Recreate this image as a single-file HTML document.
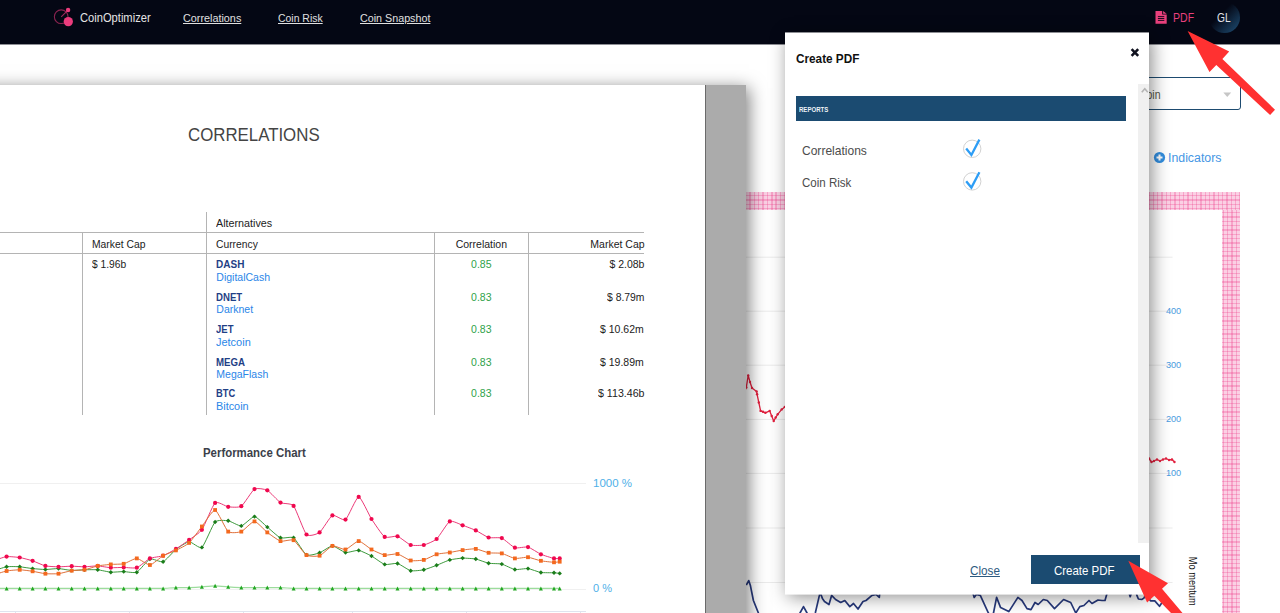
<!DOCTYPE html>
<html lang="en">
<head>
<meta charset="utf-8">
<title>CoinOptimizer - Create PDF</title>
<style>
html,body{margin:0;padding:0;overflow:hidden;}
#root{position:absolute;left:0;top:0;width:1280px;height:613px;overflow:hidden;background:#fff;}
body{width:1280px;height:613px;overflow:hidden;position:relative;background:#fff;font-family:"Liberation Sans",sans-serif;}
.abs{position:absolute;}
.t{position:absolute;white-space:nowrap;line-height:1;transform-origin:0 0;}
/* navbar */
#nav{left:0;top:0;width:1280px;height:44px;background:#040714;}
/* pdf preview image */
#doc{left:-40px;top:85px;width:786px;height:560px;background:#ababab;box-shadow:3px 3px 16px rgba(0,0,0,.5);}
#page{left:0;top:85px;width:705px;height:528px;background:#fff;}
.ln{position:absolute;background:#b4b4b4;}
.pk{position:absolute;background:
repeating-linear-gradient(0deg,rgba(236,50,130,.27) 0,rgba(236,50,130,.27) .4px,transparent .4px,transparent 1.3px),
repeating-linear-gradient(90deg,rgba(236,50,130,.27) 0,rgba(236,50,130,.27) .4px,transparent .4px,transparent 1.3px),#fbd0e4;}
/* modal */
#modal{left:785px;top:33px;width:364px;height:561px;background:#fff;box-shadow:3px 3px 17px rgba(0,0,0,.45);}
</style>
</head>
<body>
<div id="root">

<!-- underlying page (right chart area) -->
<div class="abs" style="left:1100px;top:77px;width:139px;height:31px;border:1px solid #1d4b70;border-radius:3px;"></div>
<div class="t" style="left:1128.5px;top:88.6px;font-size:12.5px;transform:scaleX(0.839);color:#554;">Bitcoin</div>
<svg class="abs" style="left:1222px;top:91px" width="12" height="8" viewBox="1222 91 12 8"><path d="M1223.300 92.500h7.900l-3.950 4.400z" fill="#c6c6c6"/></svg>
<svg class="abs" style="left:1153px;top:151px" width="13" height="13" viewBox="0 0 13 13"><circle cx="6.5" cy="6.5" r="5.6" fill="#338fe0"/><path d="M6.5 3.500v6M3.500 6.500h6" stroke="#fff" stroke-width="2"/></svg>

<div class="t" style="left:1168.0px;top:152.1px;font-size:12.5px;transform:scaleX(0.986);color:#4596e4;">Indicators</div>
<div class="pk" style="left:740px;top:192px;width:500px;height:18px"></div>
<div class="pk" style="left:1222px;top:210px;width:18px;height:403px"></div>
<svg class="abs" style="left:700px;top:180px" width="580" height="433" viewBox="700 180 580 433">
<path d="M745 257.200H1172.500M745 311.200H1172.500M745 365.200H1172.500M745 419.400H1172.500M745 473.400H1172.500M745 528H1172.500M745 582.500H1172.500" stroke="#ebebeb" stroke-width="1" fill="none"/>
<g font-family="Liberation Sans, sans-serif" font-size="9.6" fill="#4a9be0">
<text x="1165.900" y="313.900" textLength="15.300" lengthAdjust="spacingAndGlyphs">400</text><text x="1165.900" y="367.600" textLength="15.300" lengthAdjust="spacingAndGlyphs">300</text><text x="1165.900" y="421.900" textLength="15.300" lengthAdjust="spacingAndGlyphs">200</text><text x="1165.900" y="476" textLength="15.300" lengthAdjust="spacingAndGlyphs">100</text>
</g>
<path d="M744.5 392.0L746.3 387.4L748.2 375.4L750.0 382.0L752.0 388.0L756.6 391.4L757.1 394.3L758.8 402.5L760.6 410.9L763.0 411.8L765.4 412.8L769.7 410.9L771.7 416.0L773.7 421.1L775.7 417.5L777.7 414.3L781.7 409.4L784.8 406.9L788.0 404.5M1146.0 461.0L1149.0 458.5L1151.5 462.0L1154.0 461.0L1157.0 459.5L1160.0 461.0L1163.0 459.5L1166.0 458.5L1169.0 460.0L1172.0 459.5L1174.5 462.0" stroke="#e2213f" stroke-width="1.3" fill="none" stroke-linejoin="round"/>
<circle cx="744.5" cy="392.0" r="1.2" fill="#e2213f"/><circle cx="746.3" cy="387.4" r="1.2" fill="#e2213f"/><circle cx="748.2" cy="375.4" r="1.2" fill="#e2213f"/><circle cx="750.0" cy="382.0" r="1.2" fill="#e2213f"/><circle cx="752.0" cy="388.0" r="1.2" fill="#e2213f"/><circle cx="756.6" cy="391.4" r="1.2" fill="#e2213f"/><circle cx="757.1" cy="394.3" r="1.2" fill="#e2213f"/><circle cx="758.8" cy="402.5" r="1.2" fill="#e2213f"/><circle cx="760.6" cy="410.9" r="1.2" fill="#e2213f"/><circle cx="763.0" cy="411.8" r="1.2" fill="#e2213f"/><circle cx="765.4" cy="412.8" r="1.2" fill="#e2213f"/><circle cx="769.7" cy="410.9" r="1.2" fill="#e2213f"/><circle cx="771.7" cy="416.0" r="1.2" fill="#e2213f"/><circle cx="773.7" cy="421.1" r="1.2" fill="#e2213f"/><circle cx="775.7" cy="417.5" r="1.2" fill="#e2213f"/><circle cx="777.7" cy="414.3" r="1.2" fill="#e2213f"/><circle cx="781.7" cy="409.4" r="1.2" fill="#e2213f"/><circle cx="784.8" cy="406.9" r="1.2" fill="#e2213f"/><circle cx="788.0" cy="404.5" r="1.2" fill="#e2213f"/><circle cx="1146.0" cy="461.0" r="1.2" fill="#e2213f"/><circle cx="1149.0" cy="458.5" r="1.2" fill="#e2213f"/><circle cx="1151.5" cy="462.0" r="1.2" fill="#e2213f"/><circle cx="1154.0" cy="461.0" r="1.2" fill="#e2213f"/><circle cx="1157.0" cy="459.5" r="1.2" fill="#e2213f"/><circle cx="1160.0" cy="461.0" r="1.2" fill="#e2213f"/><circle cx="1163.0" cy="459.5" r="1.2" fill="#e2213f"/><circle cx="1166.0" cy="458.5" r="1.2" fill="#e2213f"/><circle cx="1169.0" cy="460.0" r="1.2" fill="#e2213f"/><circle cx="1172.0" cy="459.5" r="1.2" fill="#e2213f"/><circle cx="1174.5" cy="462.0" r="1.2" fill="#e2213f"/>
<path d="M746.3 585.2L748.7 580.6L750.3 585.2L753.4 600.5L758.4 613.0L760.0 618.0M798.5 616.0L800.0 613.0L803.5 606.6L807.0 613.0L809.0 617.0L814.0 617.0L815.3 613.0L819.4 595.4L820.0 592.0L822.4 598.4L824.5 601.5L829.0 604.5L831.6 595.4L835.6 599.5L840.7 602.5L844.8 600.5L849.8 606.6L853.5 603.5L858.0 609.0L863.0 601.5L866.0 600.5L872.0 595.4L876.0 594.4L879.3 597.4L880.0 590.0M972.0 590.0L974.2 597.4L976.3 594.4L980.3 595.4L988.4 613.0L991.0 617.0L993.5 613.0L996.6 597.4L1000.6 607.6L1004.7 609.6L1008.8 611.6L1017.9 597.4L1022.0 600.5L1027.0 608.6L1031.0 609.6L1035.0 602.5L1038.2 604.5L1043.3 599.5L1047.3 600.5L1054.5 608.6L1063.6 599.5L1070.7 602.5L1075.8 613.0L1079.8 606.6L1083.9 605.5L1089.0 600.5L1092.0 603.5L1098.0 600.0L1102.0 600.5L1105.0 600.5L1106.7 594.4L1108.0 588.0M1128.5 591.0L1130.2 596.8L1132.0 591.0M1136.0 589.0L1136.8 595.1L1138.4 599.0L1141.7 599.5L1143.9 598.1L1146.0 594.0L1148.0 597.0L1150.5 600.9L1154.8 600.9L1159.5 606.3L1161.7 603.0L1164.0 600.0" stroke="#27397c" stroke-width="1.7" fill="none" stroke-linejoin="round"/>
<text transform="translate(1188.800 556.700) rotate(90)" font-family="Liberation Sans, sans-serif" font-size="11" fill="#111" textLength="49" lengthAdjust="spacingAndGlyphs">Mo mentum</text>
</svg>

<!-- PDF preview image on the left -->
<div class="abs" id="doc"></div>
<div class="abs" id="page"></div>
<div class="abs" style="left:705px;top:85px;width:1px;height:528px;background:#6a6a6a;"></div>

<div class="ln" style="left:0;top:232px;width:644px;height:1px"></div>
<div class="ln" style="left:0;top:253px;width:644px;height:1px"></div>
<div class="ln" style="left:82px;top:232px;width:1px;height:183px"></div>
<div class="ln" style="left:206px;top:212px;width:1px;height:203px"></div>
<div class="ln" style="left:434px;top:232px;width:1px;height:183px"></div>
<div class="ln" style="left:528px;top:232px;width:1px;height:183px"></div>





<div class="t" style="left:188.3px;top:126.7px;font-size:17.8px;transform:scaleX(0.947);color:#444;">CORRELATIONS</div>
<div class="t" style="left:216.3px;top:217.8px;font-size:10.5px;transform:scaleX(1.024);color:#222;">Alternatives</div>
<div class="t" style="left:91.7px;top:238.6px;font-size:10.5px;transform:scaleX(0.985);color:#222;">Market Cap</div>
<div class="t" style="left:216.3px;top:238.6px;font-size:10.5px;transform:scaleX(0.981);color:#222;">Currency</div>
<div class="t" style="left:455.7px;top:238.6px;font-size:10.5px;color:#222;">Correlation</div>
<div class="t" style="left:590.3px;top:238.6px;font-size:10.5px;color:#222;">Market Cap</div>
<div class="t" style="left:91.7px;top:259.4px;font-size:10.5px;transform:scaleX(0.975);color:#222;">$ 1.96b</div>
<div class="t" style="left:216.3px;top:259.4px;font-size:10.5px;transform:scaleX(0.953);color:#1f3f86;font-weight:bold;">DASH</div>
<div class="t" style="left:216.3px;top:271.7px;font-size:10.5px;color:#2a86e8;">DigitalCash</div>
<div class="t" style="left:216.3px;top:292.1px;font-size:10.5px;transform:scaleX(0.915);color:#1f3f86;font-weight:bold;">DNET</div>
<div class="t" style="left:216.3px;top:303.8px;font-size:10.5px;color:#2a86e8;">Darknet</div>
<div class="t" style="left:216.3px;top:324.1px;font-size:10.5px;transform:scaleX(0.907);color:#1f3f86;font-weight:bold;">JET</div>
<div class="t" style="left:216.3px;top:336.7px;font-size:10.5px;transform:scaleX(1.044);color:#2a86e8;">Jetcoin</div>
<div class="t" style="left:216.3px;top:356.5px;font-size:10.5px;transform:scaleX(0.921);color:#1f3f86;font-weight:bold;">MEGA</div>
<div class="t" style="left:216.3px;top:368.7px;font-size:10.5px;color:#2a86e8;">MegaFlash</div>
<div class="t" style="left:216.3px;top:388.3px;font-size:10.5px;transform:scaleX(0.891);color:#1f3f86;font-weight:bold;">BTC</div>
<div class="t" style="left:216.3px;top:400.9px;font-size:10.5px;transform:scaleX(1.035);color:#2a86e8;">Bitcoin</div>
<div class="t" style="left:471.1px;top:259.4px;font-size:10.5px;color:#2fa24a;">0.85</div>
<div class="t" style="left:471.1px;top:292.1px;font-size:10.5px;color:#2fa24a;">0.83</div>
<div class="t" style="left:471.1px;top:324.1px;font-size:10.5px;color:#2fa24a;">0.83</div>
<div class="t" style="left:471.1px;top:356.5px;font-size:10.5px;color:#2fa24a;">0.83</div>
<div class="t" style="left:471.1px;top:388.3px;font-size:10.5px;color:#2fa24a;">0.83</div>
<div class="t" style="left:609.4px;top:259.4px;font-size:10.5px;color:#222;">$ 2.08b</div>
<div class="t" style="left:606.5px;top:292.1px;font-size:10.5px;transform:scaleX(0.987);color:#222;">$ 8.79m</div>
<div class="t" style="left:600.0px;top:324.1px;font-size:10.5px;color:#222;">$ 10.62m</div>
<div class="t" style="left:600.0px;top:356.5px;font-size:10.5px;color:#222;">$ 19.89m</div>
<div class="t" style="left:597.5px;top:388.3px;font-size:10.5px;transform:scaleX(1.013);color:#222;">$ 113.46b</div>
<div class="t" style="left:203.1px;top:447.3px;font-size:12px;transform:scaleX(0.951);color:#3c3f4a;font-weight:bold;">Performance Chart</div>
<div class="t" style="left:593.0px;top:478.0px;font-size:11.3px;transform:scaleX(1.019);color:#4fb0e8;">1000 %</div>
<div class="t" style="left:593.0px;top:583.4px;font-size:11.3px;transform:scaleX(0.978);color:#4fb0e8;">0 %</div>

<svg class="abs" style="left:0;top:440px" width="705" height="173" viewBox="0 440 705 173">
<path d="M0 483.5H586M0 589.5H586" stroke="#f0f0f0" stroke-width="1" fill="none"/>
<path d="M0 611.5H586M15.5 611v3M129.5 611v3M243.5 611v3M352.5 611v3M466.5 611v3M580.5 611v3" stroke="#dfe4ee" stroke-width="1" fill="none"/>
<path d="M-6.4 588.4C-5.2 588.4 4.2 588.4 6.6 588.4C8.9 588.4 17.4 588.4 19.7 588.4C22.1 588.4 30.2 588.4 32.6 588.4C34.9 588.4 43.1 588.4 45.4 588.4C47.7 588.4 56.2 588.4 58.5 588.4C60.9 588.4 69.3 588.4 71.7 588.4C74.0 588.4 82.2 588.4 84.5 588.4C86.9 588.4 95.3 588.4 97.7 588.4C100.0 588.4 108.5 588.4 110.8 588.4C113.2 588.4 121.3 588.4 123.7 588.4C126.0 588.4 134.4 588.4 136.8 588.4C139.2 588.4 147.6 588.4 149.9 588.4C152.3 588.4 160.7 588.5 163.1 588.4C165.4 588.3 173.6 587.7 175.9 587.6C178.3 587.5 186.7 587.7 189.1 587.6C191.4 587.5 199.6 587.0 201.9 586.8C204.3 586.6 212.7 585.8 215.1 585.8C217.4 585.8 225.8 586.6 228.2 586.8C230.6 587.0 239.0 587.5 241.3 587.6C243.7 587.7 252.1 587.6 254.5 587.6C256.8 587.6 265.0 587.6 267.3 587.6C269.7 587.6 278.1 587.5 280.5 587.6C282.8 587.7 291.3 588.3 293.6 588.4C295.9 588.5 304.1 588.4 306.5 588.4C308.8 588.4 317.2 588.4 319.6 588.4C321.9 588.4 330.1 588.4 332.4 588.4C334.7 588.4 343.2 588.4 345.5 588.4C347.9 588.4 356.3 588.4 358.7 588.4C361.0 588.4 369.2 588.4 371.5 588.4C373.9 588.4 382.3 588.4 384.7 588.4C387.0 588.4 395.2 588.4 397.5 588.4C399.9 588.4 408.3 588.4 410.7 588.4C413.0 588.4 421.5 588.4 423.8 588.4C426.1 588.4 434.3 588.4 436.6 588.4C439.0 588.4 447.4 588.4 449.8 588.4C452.1 588.4 460.3 588.4 462.6 588.4C465.0 588.4 473.4 588.4 475.8 588.4C478.1 588.4 486.3 588.4 488.6 588.4C491.0 588.4 499.4 588.4 501.8 588.4C504.1 588.4 512.5 588.4 514.9 588.4C517.3 588.4 525.7 588.4 528.0 588.4C530.4 588.4 538.5 588.4 540.9 588.4C543.2 588.4 552.3 588.4 554.0 588.4C555.7 588.4 559.2 588.4 559.7 588.4" stroke="#9cdc9c" stroke-width="1.2" fill="none"/>
<path d="M-6.4 586.4l2 4h-4z" fill="#22a722"/><path d="M6.6 586.4l2 4h-4z" fill="#22a722"/><path d="M19.7 586.4l2 4h-4z" fill="#22a722"/><path d="M32.6 586.4l2 4h-4z" fill="#22a722"/><path d="M45.4 586.4l2 4h-4z" fill="#22a722"/><path d="M58.5 586.4l2 4h-4z" fill="#22a722"/><path d="M71.7 586.4l2 4h-4z" fill="#22a722"/><path d="M84.5 586.4l2 4h-4z" fill="#22a722"/><path d="M97.7 586.4l2 4h-4z" fill="#22a722"/><path d="M110.8 586.4l2 4h-4z" fill="#22a722"/><path d="M123.7 586.4l2 4h-4z" fill="#22a722"/><path d="M136.8 586.4l2 4h-4z" fill="#22a722"/><path d="M149.9 586.4l2 4h-4z" fill="#22a722"/><path d="M163.1 586.4l2 4h-4z" fill="#22a722"/><path d="M175.9 585.6l2 4h-4z" fill="#22a722"/><path d="M189.1 585.6l2 4h-4z" fill="#22a722"/><path d="M201.9 584.8l2 4h-4z" fill="#22a722"/><path d="M215.1 583.8l2 4h-4z" fill="#22a722"/><path d="M228.2 584.8l2 4h-4z" fill="#22a722"/><path d="M241.3 585.6l2 4h-4z" fill="#22a722"/><path d="M254.5 585.6l2 4h-4z" fill="#22a722"/><path d="M267.3 585.6l2 4h-4z" fill="#22a722"/><path d="M280.5 585.6l2 4h-4z" fill="#22a722"/><path d="M293.6 586.4l2 4h-4z" fill="#22a722"/><path d="M306.5 586.4l2 4h-4z" fill="#22a722"/><path d="M319.6 586.4l2 4h-4z" fill="#22a722"/><path d="M332.4 586.4l2 4h-4z" fill="#22a722"/><path d="M345.5 586.4l2 4h-4z" fill="#22a722"/><path d="M358.7 586.4l2 4h-4z" fill="#22a722"/><path d="M371.5 586.4l2 4h-4z" fill="#22a722"/><path d="M384.7 586.4l2 4h-4z" fill="#22a722"/><path d="M397.5 586.4l2 4h-4z" fill="#22a722"/><path d="M410.7 586.4l2 4h-4z" fill="#22a722"/><path d="M423.8 586.4l2 4h-4z" fill="#22a722"/><path d="M436.6 586.4l2 4h-4z" fill="#22a722"/><path d="M449.8 586.4l2 4h-4z" fill="#22a722"/><path d="M462.6 586.4l2 4h-4z" fill="#22a722"/><path d="M475.8 586.4l2 4h-4z" fill="#22a722"/><path d="M488.6 586.4l2 4h-4z" fill="#22a722"/><path d="M501.8 586.4l2 4h-4z" fill="#22a722"/><path d="M514.9 586.4l2 4h-4z" fill="#22a722"/><path d="M528.0 586.4l2 4h-4z" fill="#22a722"/><path d="M540.9 586.4l2 4h-4z" fill="#22a722"/><path d="M554.0 586.4l2 4h-4z" fill="#22a722"/><path d="M559.7 586.4l2 4h-4z" fill="#22a722"/>
<path d="M-6.4 570.8C-5.2 570.4 4.2 567.2 6.6 566.8C8.9 566.4 17.4 566.6 19.7 566.8C22.1 567.0 30.2 568.3 32.6 568.6C34.9 568.8 43.1 569.5 45.4 569.5C47.7 569.5 56.2 568.5 58.5 568.6C60.9 568.7 69.3 570.3 71.7 570.4C74.0 570.5 82.2 569.8 84.5 569.8C86.9 569.7 95.3 569.6 97.7 569.8C100.0 570.0 108.5 572.0 110.8 572.2C113.2 572.3 121.3 571.6 123.7 571.6C126.0 571.6 134.4 573.3 136.8 572.2C139.2 571.0 147.6 560.0 149.9 559.0C152.3 558.1 160.7 562.6 163.1 561.7C165.4 560.9 173.6 551.3 175.9 549.5C178.3 547.7 186.7 541.9 189.1 541.7C191.4 541.5 199.6 549.2 201.9 547.4C204.3 545.6 212.7 524.4 215.1 522.0C217.4 519.6 225.8 520.5 228.2 520.8C230.6 521.1 239.0 526.3 241.3 525.9C243.7 525.5 252.1 516.5 254.5 516.6C256.8 516.7 265.0 525.2 267.3 527.1C269.7 529.0 278.1 536.9 280.5 537.8C282.8 538.8 291.3 536.3 293.6 537.8C295.9 539.4 304.1 553.5 306.5 554.9C308.8 556.2 317.2 553.6 319.6 552.8C321.9 552.0 330.1 545.9 332.4 545.9C334.7 545.9 343.2 552.1 345.5 552.5C347.9 552.9 356.3 550.0 358.7 550.4C361.0 550.7 369.2 554.8 371.5 556.0C373.9 557.3 382.3 563.7 384.7 564.4C387.0 565.1 395.2 562.9 397.5 563.5C399.9 564.1 408.3 570.1 410.7 570.7C413.0 571.2 421.5 570.3 423.8 569.8C426.1 569.3 434.3 566.2 436.6 565.3C439.0 564.4 447.4 560.6 449.8 559.9C452.1 559.3 460.3 558.2 462.6 558.1C465.0 558.1 473.4 558.6 475.8 559.0C478.1 559.5 486.3 562.8 488.6 563.2C491.0 563.7 499.4 563.5 501.8 564.1C504.1 564.7 512.5 569.1 514.9 569.5C517.3 569.9 525.7 568.3 528.0 568.6C530.4 568.9 538.5 572.1 540.9 572.5C543.2 572.8 552.3 572.7 554.0 572.8C555.7 572.9 559.2 573.3 559.7 573.4" stroke="#3c9a3c" stroke-width="1" fill="none"/>
<path d="M-6.4 568.6l2.2 2.2l-2.2 2.2l-2.2 -2.2z" fill="#1a7d1a"/><path d="M6.6 564.6l2.2 2.2l-2.2 2.2l-2.2 -2.2z" fill="#1a7d1a"/><path d="M19.7 564.6l2.2 2.2l-2.2 2.2l-2.2 -2.2z" fill="#1a7d1a"/><path d="M32.6 566.4l2.2 2.2l-2.2 2.2l-2.2 -2.2z" fill="#1a7d1a"/><path d="M45.4 567.3l2.2 2.2l-2.2 2.2l-2.2 -2.2z" fill="#1a7d1a"/><path d="M58.5 566.4l2.2 2.2l-2.2 2.2l-2.2 -2.2z" fill="#1a7d1a"/><path d="M71.7 568.2l2.2 2.2l-2.2 2.2l-2.2 -2.2z" fill="#1a7d1a"/><path d="M84.5 567.6l2.2 2.2l-2.2 2.2l-2.2 -2.2z" fill="#1a7d1a"/><path d="M97.7 567.6l2.2 2.2l-2.2 2.2l-2.2 -2.2z" fill="#1a7d1a"/><path d="M110.8 570.0l2.2 2.2l-2.2 2.2l-2.2 -2.2z" fill="#1a7d1a"/><path d="M123.7 569.4l2.2 2.2l-2.2 2.2l-2.2 -2.2z" fill="#1a7d1a"/><path d="M136.8 570.0l2.2 2.2l-2.2 2.2l-2.2 -2.2z" fill="#1a7d1a"/><path d="M149.9 556.8l2.2 2.2l-2.2 2.2l-2.2 -2.2z" fill="#1a7d1a"/><path d="M163.1 559.5l2.2 2.2l-2.2 2.2l-2.2 -2.2z" fill="#1a7d1a"/><path d="M175.9 547.3l2.2 2.2l-2.2 2.2l-2.2 -2.2z" fill="#1a7d1a"/><path d="M189.1 539.5l2.2 2.2l-2.2 2.2l-2.2 -2.2z" fill="#1a7d1a"/><path d="M201.9 545.2l2.2 2.2l-2.2 2.2l-2.2 -2.2z" fill="#1a7d1a"/><path d="M215.1 519.8l2.2 2.2l-2.2 2.2l-2.2 -2.2z" fill="#1a7d1a"/><path d="M228.2 518.6l2.2 2.2l-2.2 2.2l-2.2 -2.2z" fill="#1a7d1a"/><path d="M241.3 523.7l2.2 2.2l-2.2 2.2l-2.2 -2.2z" fill="#1a7d1a"/><path d="M254.5 514.4l2.2 2.2l-2.2 2.2l-2.2 -2.2z" fill="#1a7d1a"/><path d="M267.3 524.9l2.2 2.2l-2.2 2.2l-2.2 -2.2z" fill="#1a7d1a"/><path d="M280.5 535.6l2.2 2.2l-2.2 2.2l-2.2 -2.2z" fill="#1a7d1a"/><path d="M293.6 535.6l2.2 2.2l-2.2 2.2l-2.2 -2.2z" fill="#1a7d1a"/><path d="M306.5 552.7l2.2 2.2l-2.2 2.2l-2.2 -2.2z" fill="#1a7d1a"/><path d="M319.6 550.6l2.2 2.2l-2.2 2.2l-2.2 -2.2z" fill="#1a7d1a"/><path d="M332.4 543.7l2.2 2.2l-2.2 2.2l-2.2 -2.2z" fill="#1a7d1a"/><path d="M345.5 550.3l2.2 2.2l-2.2 2.2l-2.2 -2.2z" fill="#1a7d1a"/><path d="M358.7 548.2l2.2 2.2l-2.2 2.2l-2.2 -2.2z" fill="#1a7d1a"/><path d="M371.5 553.8l2.2 2.2l-2.2 2.2l-2.2 -2.2z" fill="#1a7d1a"/><path d="M384.7 562.2l2.2 2.2l-2.2 2.2l-2.2 -2.2z" fill="#1a7d1a"/><path d="M397.5 561.3l2.2 2.2l-2.2 2.2l-2.2 -2.2z" fill="#1a7d1a"/><path d="M410.7 568.5l2.2 2.2l-2.2 2.2l-2.2 -2.2z" fill="#1a7d1a"/><path d="M423.8 567.6l2.2 2.2l-2.2 2.2l-2.2 -2.2z" fill="#1a7d1a"/><path d="M436.6 563.1l2.2 2.2l-2.2 2.2l-2.2 -2.2z" fill="#1a7d1a"/><path d="M449.8 557.7l2.2 2.2l-2.2 2.2l-2.2 -2.2z" fill="#1a7d1a"/><path d="M462.6 555.9l2.2 2.2l-2.2 2.2l-2.2 -2.2z" fill="#1a7d1a"/><path d="M475.8 556.8l2.2 2.2l-2.2 2.2l-2.2 -2.2z" fill="#1a7d1a"/><path d="M488.6 561.0l2.2 2.2l-2.2 2.2l-2.2 -2.2z" fill="#1a7d1a"/><path d="M501.8 561.9l2.2 2.2l-2.2 2.2l-2.2 -2.2z" fill="#1a7d1a"/><path d="M514.9 567.3l2.2 2.2l-2.2 2.2l-2.2 -2.2z" fill="#1a7d1a"/><path d="M528.0 566.4l2.2 2.2l-2.2 2.2l-2.2 -2.2z" fill="#1a7d1a"/><path d="M540.9 570.3l2.2 2.2l-2.2 2.2l-2.2 -2.2z" fill="#1a7d1a"/><path d="M554.0 570.6l2.2 2.2l-2.2 2.2l-2.2 -2.2z" fill="#1a7d1a"/><path d="M559.7 571.2l2.2 2.2l-2.2 2.2l-2.2 -2.2z" fill="#1a7d1a"/>
<path d="M-6.4 560.6C-5.2 560.3 4.2 556.9 6.6 556.6C8.9 556.4 17.4 557.2 19.7 557.5C22.1 557.9 30.2 560.1 32.6 560.8C34.9 561.6 43.1 565.4 45.4 565.9C47.7 566.4 56.2 566.8 58.5 566.8C60.9 566.8 69.3 566.2 71.7 566.2C74.0 566.2 82.2 566.8 84.5 566.8C86.9 566.8 95.3 565.8 97.7 565.9C100.0 566.0 108.5 567.6 110.8 567.7C113.2 567.8 121.3 567.4 123.7 567.4C126.0 567.4 134.4 568.5 136.8 567.7C139.2 566.9 147.6 559.5 149.9 558.4C152.3 557.4 160.7 556.6 163.1 555.7C165.4 554.9 173.6 550.3 175.9 548.9C178.3 547.5 186.7 541.6 189.1 539.9C191.4 538.2 199.6 533.1 201.9 529.8C204.3 526.4 212.7 504.9 215.1 502.9C217.4 500.8 225.8 506.5 228.2 506.8C230.6 507.1 239.0 507.8 241.3 506.2C243.7 504.6 252.1 490.6 254.5 489.1C256.8 487.7 265.0 489.1 267.3 490.3C269.7 491.5 278.1 501.2 280.5 502.6C282.8 504.0 291.3 503.0 293.6 505.9C295.9 508.7 304.1 532.1 306.5 534.5C308.8 536.9 317.2 534.2 319.6 532.4C321.9 530.7 330.1 516.6 332.4 515.4C334.7 514.3 343.2 521.3 345.5 519.6C347.9 517.9 356.3 497.0 358.7 496.9C361.0 496.9 369.2 515.4 371.5 519.0C373.9 522.6 382.3 535.4 384.7 536.9C387.0 538.5 395.2 535.6 397.5 536.3C399.9 537.1 408.3 544.2 410.7 545.0C413.0 545.8 421.5 545.5 423.8 545.0C426.1 544.5 434.3 541.1 436.6 539.0C439.0 536.9 447.4 522.6 449.8 521.4C452.1 520.2 460.3 524.5 462.6 525.3C465.0 526.1 473.4 529.3 475.8 530.4C478.1 531.5 486.3 536.8 488.6 537.5C491.0 538.2 499.4 537.2 501.8 538.1C504.1 539.0 512.5 546.9 514.9 547.7C517.3 548.5 525.7 546.5 528.0 547.1C530.4 547.7 538.5 553.2 540.9 554.3C543.2 555.3 552.3 558.1 554.0 558.4C555.7 558.8 559.2 558.4 559.7 558.4" stroke="#ec3a78" stroke-width="1" fill="none"/>
<circle cx="-6.4" cy="560.6" r="2.1" fill="#f0084e"/><circle cx="6.6" cy="556.6" r="2.1" fill="#f0084e"/><circle cx="19.7" cy="557.5" r="2.1" fill="#f0084e"/><circle cx="32.6" cy="560.8" r="2.1" fill="#f0084e"/><circle cx="45.4" cy="565.9" r="2.1" fill="#f0084e"/><circle cx="58.5" cy="566.8" r="2.1" fill="#f0084e"/><circle cx="71.7" cy="566.2" r="2.1" fill="#f0084e"/><circle cx="84.5" cy="566.8" r="2.1" fill="#f0084e"/><circle cx="97.7" cy="565.9" r="2.1" fill="#f0084e"/><circle cx="110.8" cy="567.7" r="2.1" fill="#f0084e"/><circle cx="123.7" cy="567.4" r="2.1" fill="#f0084e"/><circle cx="136.8" cy="567.7" r="2.1" fill="#f0084e"/><circle cx="149.9" cy="558.4" r="2.1" fill="#f0084e"/><circle cx="163.1" cy="555.7" r="2.1" fill="#f0084e"/><circle cx="175.9" cy="548.9" r="2.1" fill="#f0084e"/><circle cx="189.1" cy="539.9" r="2.1" fill="#f0084e"/><circle cx="201.9" cy="529.8" r="2.1" fill="#f0084e"/><circle cx="215.1" cy="502.9" r="2.1" fill="#f0084e"/><circle cx="228.2" cy="506.8" r="2.1" fill="#f0084e"/><circle cx="241.3" cy="506.2" r="2.1" fill="#f0084e"/><circle cx="254.5" cy="489.1" r="2.1" fill="#f0084e"/><circle cx="267.3" cy="490.3" r="2.1" fill="#f0084e"/><circle cx="280.5" cy="502.6" r="2.1" fill="#f0084e"/><circle cx="293.6" cy="505.9" r="2.1" fill="#f0084e"/><circle cx="306.5" cy="534.5" r="2.1" fill="#f0084e"/><circle cx="319.6" cy="532.4" r="2.1" fill="#f0084e"/><circle cx="332.4" cy="515.4" r="2.1" fill="#f0084e"/><circle cx="345.5" cy="519.6" r="2.1" fill="#f0084e"/><circle cx="358.7" cy="496.9" r="2.1" fill="#f0084e"/><circle cx="371.5" cy="519.0" r="2.1" fill="#f0084e"/><circle cx="384.7" cy="536.9" r="2.1" fill="#f0084e"/><circle cx="397.5" cy="536.3" r="2.1" fill="#f0084e"/><circle cx="410.7" cy="545.0" r="2.1" fill="#f0084e"/><circle cx="423.8" cy="545.0" r="2.1" fill="#f0084e"/><circle cx="436.6" cy="539.0" r="2.1" fill="#f0084e"/><circle cx="449.8" cy="521.4" r="2.1" fill="#f0084e"/><circle cx="462.6" cy="525.3" r="2.1" fill="#f0084e"/><circle cx="475.8" cy="530.4" r="2.1" fill="#f0084e"/><circle cx="488.6" cy="537.5" r="2.1" fill="#f0084e"/><circle cx="501.8" cy="538.1" r="2.1" fill="#f0084e"/><circle cx="514.9" cy="547.7" r="2.1" fill="#f0084e"/><circle cx="528.0" cy="547.1" r="2.1" fill="#f0084e"/><circle cx="540.9" cy="554.3" r="2.1" fill="#f0084e"/><circle cx="554.0" cy="558.4" r="2.1" fill="#f0084e"/><circle cx="559.7" cy="558.4" r="2.1" fill="#f0084e"/>
<path d="M-6.4 575.0C-5.2 574.6 4.2 571.4 6.6 571.0C8.9 570.5 17.4 569.8 19.7 569.8C22.1 569.8 30.2 570.9 32.6 571.3C34.9 571.6 43.1 573.5 45.4 573.7C47.7 573.9 56.2 573.9 58.5 573.7C60.9 573.4 69.3 571.0 71.7 570.7C74.0 570.3 82.2 570.2 84.5 569.8C86.9 569.4 95.3 566.4 97.7 565.9C100.0 565.4 108.5 564.6 110.8 564.4C113.2 564.2 121.3 564.3 123.7 563.8C126.0 563.3 134.4 558.3 136.8 558.4C139.2 558.5 147.6 565.2 149.9 565.0C152.3 564.8 160.7 557.1 163.1 555.7C165.4 554.4 173.6 551.5 175.9 550.4C178.3 549.2 186.7 545.1 189.1 542.9C191.4 540.8 199.6 529.4 201.9 526.5C204.3 523.5 212.7 509.6 215.1 510.0C217.4 510.5 225.8 529.6 228.2 531.6C230.6 533.5 239.0 532.5 241.3 531.6C243.7 530.6 252.1 521.3 254.5 521.4C256.8 521.5 265.0 530.7 267.3 532.4C269.7 534.2 278.1 540.4 280.5 541.1C282.8 541.8 291.3 539.0 293.6 540.2C295.9 541.5 304.1 553.8 306.5 555.1C308.8 556.5 317.2 556.6 319.6 555.7C321.9 554.9 330.1 546.5 332.4 545.9C334.7 545.3 343.2 549.9 345.5 549.5C347.9 549.0 356.3 541.1 358.7 541.1C361.0 541.1 369.2 548.2 371.5 549.5C373.9 550.7 382.3 554.7 384.7 555.1C387.0 555.6 395.2 553.5 397.5 554.0C399.9 554.4 408.3 560.0 410.7 560.5C413.0 561.1 421.5 560.5 423.8 559.9C426.1 559.4 434.3 554.9 436.6 554.3C439.0 553.6 447.4 552.8 449.8 552.5C452.1 552.1 460.3 550.4 462.6 550.1C465.0 549.7 473.4 548.6 475.8 548.9C478.1 549.1 486.3 552.4 488.6 552.8C491.0 553.2 499.4 552.8 501.8 553.4C504.1 553.9 512.5 558.1 514.9 558.4C517.3 558.8 525.7 557.0 528.0 557.2C530.4 557.5 538.5 560.4 540.9 560.8C543.2 561.3 552.3 562.2 554.0 562.3C555.7 562.4 559.2 561.8 559.7 561.7" stroke="#e0703a" stroke-width="1" fill="none"/>
<rect x="-8.3" y="573.1" width="3.8" height="3.8" fill="#f4691e"/><rect x="4.7" y="569.1" width="3.8" height="3.8" fill="#f4691e"/><rect x="17.8" y="567.9" width="3.8" height="3.8" fill="#f4691e"/><rect x="30.7" y="569.4" width="3.8" height="3.8" fill="#f4691e"/><rect x="43.5" y="571.8" width="3.8" height="3.8" fill="#f4691e"/><rect x="56.6" y="571.8" width="3.8" height="3.8" fill="#f4691e"/><rect x="69.8" y="568.8" width="3.8" height="3.8" fill="#f4691e"/><rect x="82.6" y="567.9" width="3.8" height="3.8" fill="#f4691e"/><rect x="95.8" y="564.0" width="3.8" height="3.8" fill="#f4691e"/><rect x="108.9" y="562.5" width="3.8" height="3.8" fill="#f4691e"/><rect x="121.8" y="561.9" width="3.8" height="3.8" fill="#f4691e"/><rect x="134.9" y="556.5" width="3.8" height="3.8" fill="#f4691e"/><rect x="148.0" y="563.1" width="3.8" height="3.8" fill="#f4691e"/><rect x="161.2" y="553.8" width="3.8" height="3.8" fill="#f4691e"/><rect x="174.0" y="548.5" width="3.8" height="3.8" fill="#f4691e"/><rect x="187.2" y="541.0" width="3.8" height="3.8" fill="#f4691e"/><rect x="200.0" y="524.6" width="3.8" height="3.8" fill="#f4691e"/><rect x="213.2" y="508.1" width="3.8" height="3.8" fill="#f4691e"/><rect x="226.3" y="529.7" width="3.8" height="3.8" fill="#f4691e"/><rect x="239.4" y="529.7" width="3.8" height="3.8" fill="#f4691e"/><rect x="252.6" y="519.5" width="3.8" height="3.8" fill="#f4691e"/><rect x="265.4" y="530.5" width="3.8" height="3.8" fill="#f4691e"/><rect x="278.6" y="539.2" width="3.8" height="3.8" fill="#f4691e"/><rect x="291.7" y="538.3" width="3.8" height="3.8" fill="#f4691e"/><rect x="304.6" y="553.2" width="3.8" height="3.8" fill="#f4691e"/><rect x="317.7" y="553.8" width="3.8" height="3.8" fill="#f4691e"/><rect x="330.5" y="544.0" width="3.8" height="3.8" fill="#f4691e"/><rect x="343.6" y="547.6" width="3.8" height="3.8" fill="#f4691e"/><rect x="356.8" y="539.2" width="3.8" height="3.8" fill="#f4691e"/><rect x="369.6" y="547.6" width="3.8" height="3.8" fill="#f4691e"/><rect x="382.8" y="553.2" width="3.8" height="3.8" fill="#f4691e"/><rect x="395.6" y="552.1" width="3.8" height="3.8" fill="#f4691e"/><rect x="408.8" y="558.6" width="3.8" height="3.8" fill="#f4691e"/><rect x="421.9" y="558.0" width="3.8" height="3.8" fill="#f4691e"/><rect x="434.7" y="552.4" width="3.8" height="3.8" fill="#f4691e"/><rect x="447.9" y="550.6" width="3.8" height="3.8" fill="#f4691e"/><rect x="460.7" y="548.2" width="3.8" height="3.8" fill="#f4691e"/><rect x="473.9" y="547.0" width="3.8" height="3.8" fill="#f4691e"/><rect x="486.7" y="550.9" width="3.8" height="3.8" fill="#f4691e"/><rect x="499.9" y="551.5" width="3.8" height="3.8" fill="#f4691e"/><rect x="513.0" y="556.5" width="3.8" height="3.8" fill="#f4691e"/><rect x="526.1" y="555.3" width="3.8" height="3.8" fill="#f4691e"/><rect x="539.0" y="558.9" width="3.8" height="3.8" fill="#f4691e"/><rect x="552.1" y="560.4" width="3.8" height="3.8" fill="#f4691e"/><rect x="557.8" y="559.8" width="3.8" height="3.8" fill="#f4691e"/>
</svg>


<!-- navbar -->
<div class="abs" id="nav"></div>
<div class="abs" style="left:0;top:44px;width:1280px;height:1px;background:rgba(4,7,20,.45);"></div>
<svg class="abs" style="left:50px;top:4px" width="28" height="28" viewBox="50 4 28 28">
<circle cx="61.2" cy="16.7" r="6.85" fill="none" stroke="#8a2350" stroke-width="1.1"/>
<path d="M61.2 16.900L68 10.100" stroke="#a02a5c" stroke-width="1.1"/>
<circle cx="68.1" cy="10" r="2.2" fill="#eb3c7d"/>
<circle cx="68.3" cy="21.6" r="4.65" fill="#eb3c7d"/>
</svg>

<div class="t" style="left:80.0px;top:11.7px;font-size:12px;transform:scaleX(0.929);color:#e4e4e4;">CoinOptimizer</div>
<div class="t" style="left:182.7px;top:12.0px;font-size:11.7px;transform:scaleX(0.925);color:#e0e0e0;text-decoration:underline;">Correlations</div>
<div class="t" style="left:278.3px;top:12.0px;font-size:11.7px;transform:scaleX(0.893);color:#e0e0e0;text-decoration:underline;">Coin Risk</div>
<div class="t" style="left:359.9px;top:12.0px;font-size:11.7px;transform:scaleX(0.918);color:#e0e0e0;text-decoration:underline;">Coin Snapshot</div>
<svg class="abs" style="left:1155px;top:10px" width="13" height="15" viewBox="0 0 13 15">
<path d="M0.500 1.100h6.700v3.500h4.500v9.200H0.500zM8.100 1.100l3.600 2.700H8.100z" fill="#e8407c"/>
<path d="M2.900 6.600h6.400M2.900 8.500h6.400M2.900 10.400h6.400" stroke="#040714" stroke-width="0.9"/>
</svg>
<div class="abs" style="left:1209px;top:2px;width:31px;height:31px;border-radius:50%;background:linear-gradient(135deg,#040714 38%,#1f5078 100%);"></div>

<div class="t" style="left:1173.2px;top:12.0px;font-size:12px;transform:scaleX(0.879);color:#e8407c;">PDF</div>
<div class="t" style="left:1216.9px;top:12.1px;font-size:12.5px;transform:scaleX(0.813);color:#e2e2e8;">GL</div>
<!-- modal -->
<div class="abs" id="modal"></div>
<div class="abs" style="left:785px;top:32px;width:364px;height:1px;background:rgba(255,255,255,.55);"></div>
<div class="abs" style="left:785px;top:594px;width:364px;height:1px;background:rgba(255,255,255,.6);"></div>
<svg class="abs" style="left:1130px;top:47px" width="10" height="11" viewBox="0 0 10 11"><path d="M1.600 2.200l6.600 6.600M8.200 2.200l-6.600 6.600" stroke="#10121f" stroke-width="2.600"/></svg>
<div class="abs" style="left:1138px;top:84px;width:11px;height:459px;background:#f0f0f0;"></div>
<svg class="abs" style="left:1140px;top:87px" width="9" height="7" viewBox="1140 87 9 7"><path d="M1141.800 92.300l3-3.600l3 3.600" stroke="#b4b4b4" stroke-width="1.600" fill="none"/></svg>
<div class="abs" style="left:796px;top:96px;width:330px;height:25px;background:#1b4b71;"></div>
<svg class="abs" style="left:960px;top:135px" width="26" height="60" viewBox="960 135 26 60">
<circle cx="972.2" cy="148.8" r="8.7" fill="#fff" stroke="#d2d2d2" stroke-width="1"/>
<path d="M966.2 148.6l5.2 6.4L979.4 139.6" stroke="#2d9df5" stroke-width="2.3" fill="none"/>
<circle cx="972.2" cy="181.4" r="8.7" fill="#fff" stroke="#d2d2d2" stroke-width="1"/>
<path d="M966.2 181.2l5.2 6.4L979.4 172.2" stroke="#2d9df5" stroke-width="2.3" fill="none"/>
</svg>
<div class="abs" style="left:1031px;top:555px;width:109px;height:29px;background:#1b4b71;"></div>

<div class="t" style="left:796.2px;top:52.5px;font-size:12px;transform:scaleX(0.980);color:#111;font-weight:bold;">Create PDF</div>
<div class="t" style="left:799.1px;top:105.9px;font-size:8px;transform:scaleX(0.757);color:#eef2f6;font-weight:bold;">REPORTS</div>
<div class="t" style="left:801.7px;top:143.9px;font-size:13px;transform:scaleX(0.925);color:#4c4c4c;">Correlations</div>
<div class="t" style="left:801.7px;top:176.1px;font-size:13px;transform:scaleX(0.887);color:#4c4c4c;">Coin Risk</div>
<div class="t" style="left:970.0px;top:563.7px;font-size:13px;transform:scaleX(0.900);color:#2c5a80;text-decoration:underline;">Close</div>
<div class="t" style="left:1054.4px;top:563.7px;font-size:13px;transform:scaleX(0.882);color:#fff;">Create PDF</div>
<!-- red annotation arrows -->
<svg class="abs" style="left:1100px;top:0" width="180" height="613" viewBox="1100 0 180 613">
<path d="M1187.600 30.900L1229.200 51.600L1222.400 59.100L1275 109.700L1270.100 115.100L1216.300 64.900L1209.500 72z" fill="#ff3131"/>
<path d="M1128.300 560.700L1168 583.200L1162 588.700L1182.500 613L1171 613L1154.300 595.800L1147.100 602.400z" fill="#ff3131"/>
</svg>

</div>
</body>
</html>
